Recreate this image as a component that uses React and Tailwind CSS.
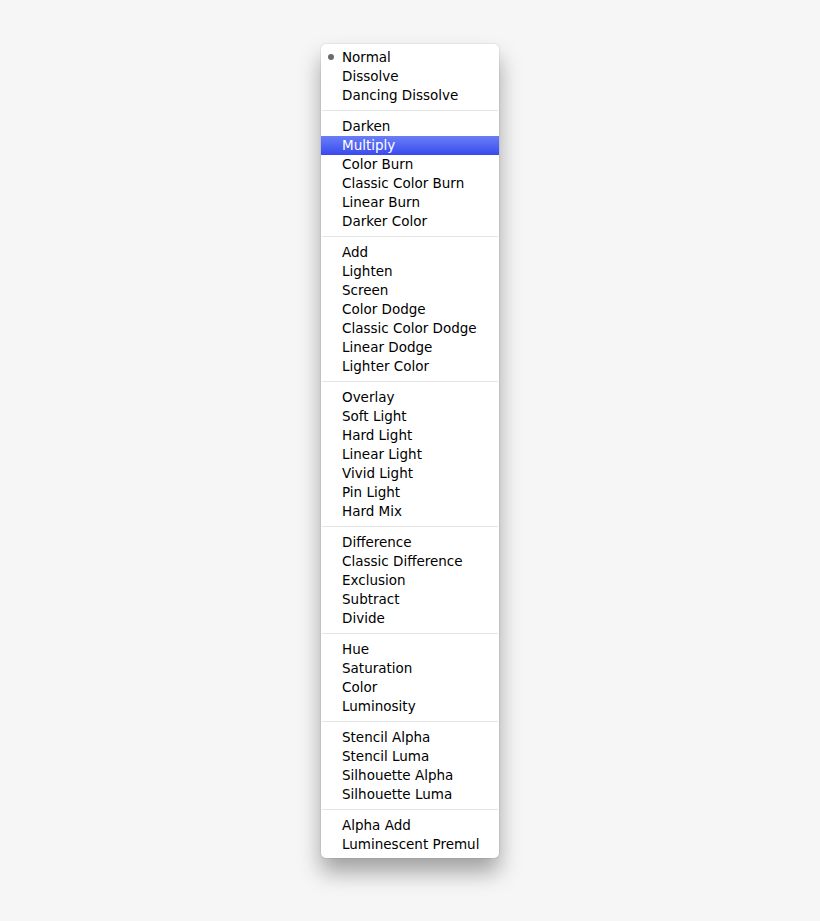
const groups = [
  ['Normal', 'Dissolve', 'Dancing Dissolve'],
  ['Darken', 'Multiply', 'Color Burn', 'Classic Color Burn', 'Linear Burn', 'Darker Color'],
  ['Add', 'Lighten', 'Screen', 'Color Dodge', 'Classic Color Dodge', 'Linear Dodge', 'Lighter Color'],
  ['Overlay', 'Soft Light', 'Hard Light', 'Linear Light', 'Vivid Light', 'Pin Light', 'Hard Mix'],
  ['Difference', 'Classic Difference', 'Exclusion', 'Subtract', 'Divide'],
  ['Hue', 'Saturation', 'Color', 'Luminosity'],
  ['Stencil Alpha', 'Stencil Luma', 'Silhouette Alpha', 'Silhouette Luma'],
  ['Alpha Add', 'Luminescent Premul'],
]

const MenuItem = ({ label }) => {
  const selected = label === 'Multiply'
  return (
    <div
      className={`relative h-[19px] pl-[21px] text-[13.5px] leading-[19px] whitespace-nowrap ${
        selected ? 'bg-gradient-to-b from-[#6a7ef6] to-[#3b48ee] text-white font-medium' : 'text-black'
      }`}
    >
      {label === 'Normal' && (
        <span className="absolute left-[7px] top-[6px] w-[6px] h-[6px] rounded-full bg-[#6b6b6b]"></span>
      )}
      {label}
    </div>
  )
}

const App = () => {
  return (
    <div className="min-h-[921px] bg-[#f6f6f6] pt-[44px] flex justify-center font-['DejaVu_Sans',sans-serif]">
      <div className="w-[178px] h-[814px] pt-[4px] bg-white rounded-[5px] shadow-[0_0_0_1px_rgba(0,0,0,0.05),0_14px_22px_rgba(0,0,0,0.35)]">
        {groups.map((group, i) => (
          <div key={i}>
            {i > 0 && (
              <div className="h-px mx-px mt-[5px] mb-[6px] bg-[#e4e4e4]"></div>
            )}
            {group.map(label => (
              <MenuItem key={label} label={label} />
            ))}
          </div>
        ))}
      </div>
    </div>
  )
}

export default App
